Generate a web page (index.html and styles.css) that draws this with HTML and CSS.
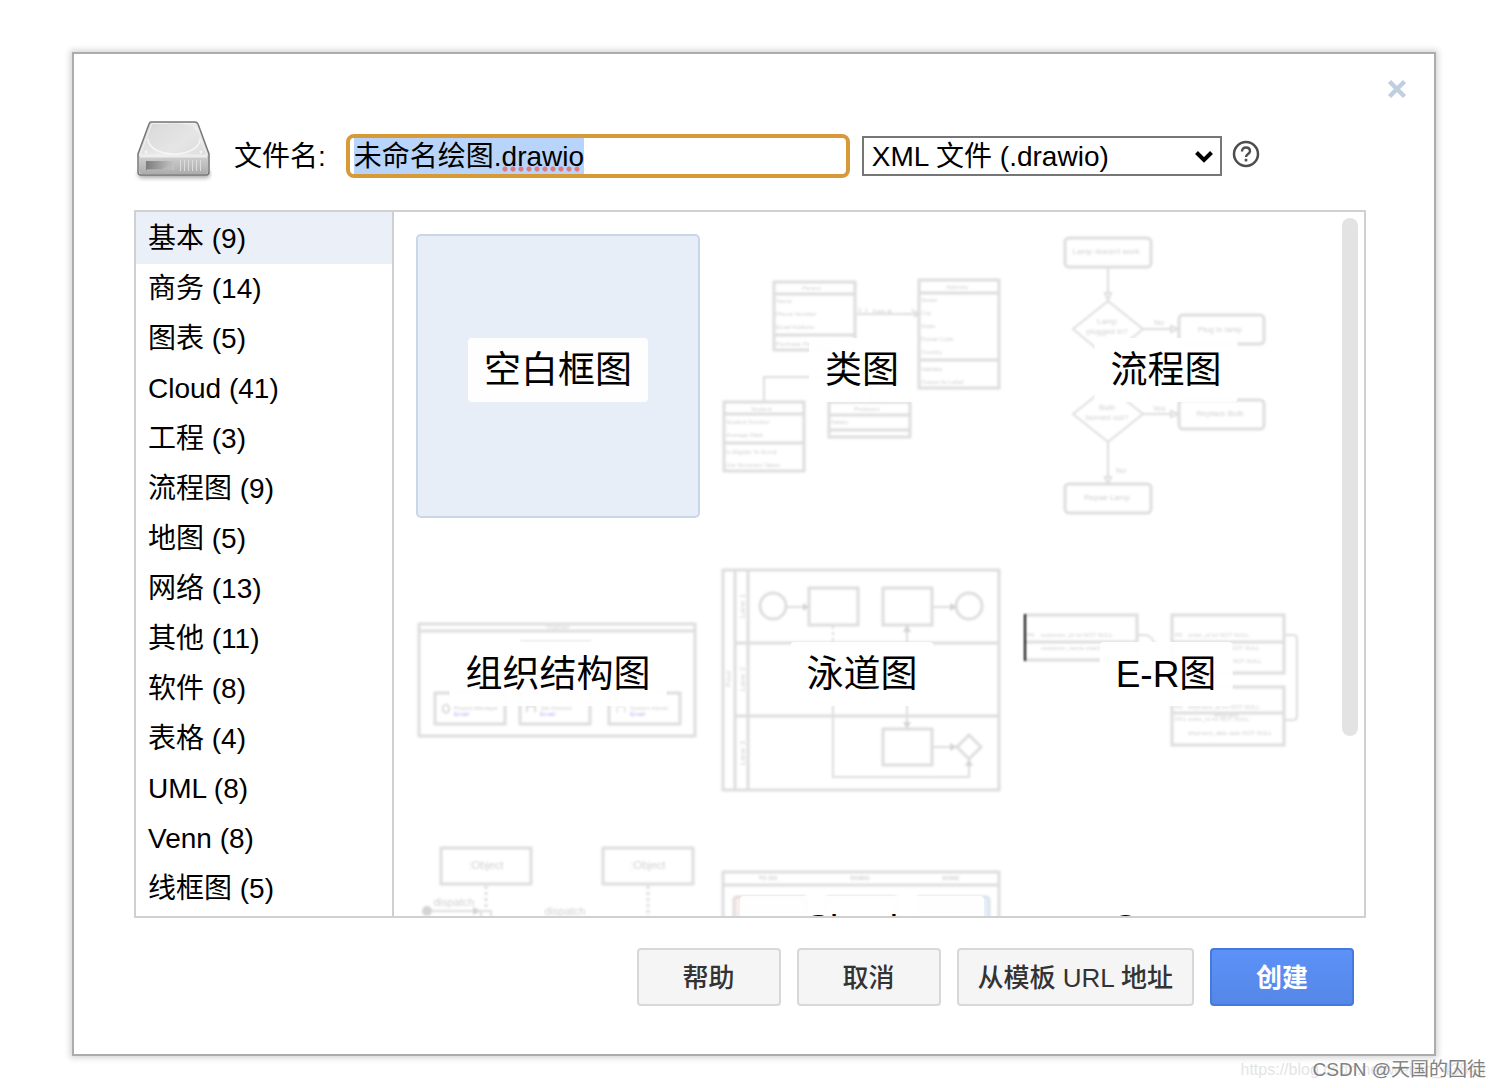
FILE: index.html
```html
<!DOCTYPE html>
<html lang="zh-CN">
<head>
  <meta charset="UTF-8" />
  <meta name="viewport" content="width=device-width, initial-scale=1.0"/>
  <title>未命名绘图.drawio</title>
  <link rel="stylesheet" href="styles.css">
</head>
<body>

  <main class="dialog">
    <button type="button" class="close-btn" aria-label="关闭">
      <svg width="20" height="20" viewBox="0 0 20 20"><path d="M2.500 2.500L17.500 17.500M17.500 2.500L2.500 17.500" stroke="#c0cfe0" stroke-width="4.500"/></svg>
    </button>

    <form class="file-row" id="fileForm">
      <svg class="drive-icon" viewBox="0 0 78 72">
        <defs>
          <linearGradient id="top" x1="0" y1="0" x2="1" y2="1">
            <stop offset="0" stop-color="#d2d2d2"/>
            <stop offset="0.5" stop-color="#ececec"/>
            <stop offset="1" stop-color="#cfcfcf"/>
          </linearGradient>
          <linearGradient id="front" x1="0" y1="0" x2="0" y2="1">
            <stop offset="0" stop-color="#d0d0d0"/>
            <stop offset="1" stop-color="#acacac"/>
          </linearGradient>
          <linearGradient id="slot" x1="0" y1="0" x2="1" y2="0">
            <stop offset="0" stop-color="#7d7d7d"/>
            <stop offset="1" stop-color="#c4c4c4"/>
          </linearGradient>
        </defs>
        <rect class="soft" x="4" y="50" width="72" height="8" rx="4" fill="#aaa"/>
        <path d="M17 2H61Q63 2 64 4L75 34V52Q75 55 72 55H7Q4 55 4 52V34L15 4Q16 2 17 2Z" fill="url(#top)" stroke="#777" stroke-width="1.500"/>
        <path d="M5 36H74V51Q74 54 71 54H8Q5 54 5 51Z" fill="url(#front)"/>
        <path d="M18 3.500H60L73 35H6Z" fill="none" stroke="#f2f2f2"/>
        <ellipse cx="40" cy="18" rx="26" ry="15" fill="#dedede" fill-opacity="0.5"/>
        <path d="M14 19A26 15 0 0 0 66 19" fill="none" stroke="#f6f6f6" stroke-width="1.500"/>
        <circle cx="12" cy="32" r="1.500" fill="#f5f5f5"/><circle cx="67" cy="32" r="1.500" fill="#f5f5f5"/>
        <path d="M6 36.500H73" stroke="#eee" stroke-width="2"/>
        <rect x="12" y="41" width="28" height="9" fill="url(#slot)"/>
        <path d="M13 49L28 49L39 43V50H13Z" fill="#bdbdbd" fill-opacity="0.6"/>
        <path d="M46.500 40V51M50.500 40V51M54.500 40V51M58.500 40V51M62.500 40V51M66.500 40V51" stroke="#dcdcdc"/>
      </svg>
      <label class="file-label" for="filename">文件名:</label>
      <div class="name-field">
        <input type="text" id="filename" name="filename" value="未命名绘图.drawio" spellcheck="false" autofocus />
        <span class="spell-mark"></span>
      </div>
      <div class="type-field">
        <select id="filetype" name="filetype" aria-label="文件类型">
          <option>XML 文件 (.drawio)</option>
        </select>
        <svg class="chevron" width="20" height="14" viewBox="0 0 20 14"><path d="M2.500 2.500L10 10L17.500 2.500" fill="none" stroke="#000" stroke-width="4"/></svg>
      </div>
      <a class="help-link" href="#help" aria-label="帮助">
        <svg width="28" height="32" viewBox="0 0 28 32">
          <circle cx="14" cy="14" r="12" fill="none" stroke="#4d4d4d" stroke-width="2.500"/>
          <path d="M10 11.500Q10 7.500 14 7.500T18 11.200C18 14 14 14 14 17" fill="none" stroke="#4d4d4d" stroke-width="2.400"/>
          <rect x="12.700" y="18.800" width="2.600" height="2.600" fill="#4d4d4d"/>
        </svg>
      </a>
    </form>

    <div class="picker">
      <nav class="categories">
        <button type="button" class="category active">基本 (9)</button>
        <button type="button" class="category">商务 (14)</button>
        <button type="button" class="category">图表 (5)</button>
        <button type="button" class="category">Cloud (41)</button>
        <button type="button" class="category">工程 (3)</button>
        <button type="button" class="category">流程图 (9)</button>
        <button type="button" class="category">地图 (5)</button>
        <button type="button" class="category">网络 (13)</button>
        <button type="button" class="category">其他 (11)</button>
        <button type="button" class="category">软件 (8)</button>
        <button type="button" class="category">表格 (4)</button>
        <button type="button" class="category">UML (8)</button>
        <button type="button" class="category">Venn (8)</button>
        <button type="button" class="category">线框图 (5)</button>
      </nav>

      <div class="template-pane">
        <div class="templates">
          <button type="button" class="template selected">
            <span class="template-label">空白框图</span>
          </button>

          <!-- Class diagram -->
          <button type="button" class="template">
            <svg class="preview" viewBox="0 0 284 284">
              <g class="line">
                <path d="M54 48H135V116H54ZM54 60H135M54 101H135"/>
                <path d="M199 46H279V154H199ZM199 59H279M199 126H279"/>
                <path d="M4 168H84V237H4ZM4 180H84M4 209H84"/>
                <path d="M109 168H190V203H109ZM109 181H190M109 196H190"/>
                <path class="thin" d="M135 80H199M44 168V143H150V168M105 143V116M194 77L199 80L194 83"/>
              </g>
              <g class="tiny">
                <text x="82" y="56">Person</text>
                <text x="56" y="69">Name</text><text x="56" y="82">Phone Number</text><text x="56" y="95">Email Address</text>
                <text x="56" y="112">Purchase Parking Pass</text>
                <text x="138" y="78">0..1</text><text x="153" y="79">lives at</text><text x="191" y="78">1</text>
                <text x="226" y="55">Address</text>
                <text x="201" y="68">Street</text><text x="201" y="81">City</text><text x="201" y="94">State</text>
                <text x="201" y="107">Postal Code</text><text x="201" y="120">Country</text>
                <text x="201" y="137">Validate</text><text x="201" y="150">Output As Label</text>
                <text x="31" y="177">Student</text>
                <text x="6" y="190">Student Number</text><text x="6" y="203">Average Mark</text>
                <text x="6" y="220">Is Eligible To Enroll</text><text x="6" y="233">Get Seminars Taken</text>
                <text x="134" y="177">Professor</text><text x="111" y="190">Salary</text>
              </g>
            </svg>
            <span class="template-label">类图</span>
          </button>

          <!-- Flowchart -->
          <button type="button" class="template">
            <svg class="preview" viewBox="0 0 284 284">
              <g class="line">
                <rect x="41" y="4" width="86" height="29" rx="4"/>
                <rect x="155" y="81" width="85" height="29" rx="4"/>
                <rect x="155" y="166" width="85" height="29" rx="4"/>
                <rect x="41" y="250" width="86" height="29" rx="4"/>
                <path class="thin" d="M84 33V59M84 124V152M84 208V243M119 95H147M119 180H147"/>
                <path class="thin" d="M84 67L119 95L84 124L49 95ZM84 152L119 180L84 208L49 180Z"/>
                <path class="thin" d="M81 59H87L84 66ZM81 243H87L84 250ZM147 92V98L154 95ZM147 177V183L154 180Z"/>
              </g>
              <g class="small">
                <text x="82" y="20">Lamp doesn't work</text>
                <text x="83" y="90">Lamp</text><text x="83" y="100">plugged in?</text>
                <text x="135" y="91">No</text><text x="196" y="98">Plug in lamp</text>
                <text x="83" y="176">Bulb</text><text x="83" y="186">burned out?</text>
                <text x="135" y="177">Yes</text><text x="196" y="182">Replace Bulb</text>
                <text x="97" y="239">No</text><text x="83" y="266">Repair Lamp</text>
              </g>
            </svg>
            <span class="template-label">流程图</span>
          </button>

          <!-- Org chart -->
          <button type="button" class="template">
            <svg class="preview" viewBox="0 0 284 284">
              <g class="line">
                <path d="M3 86H279V198H3ZM3 93H279"/>
                <path d="M19 155H89V186H19ZM104 155H174V186H104ZM193 155H264V186H193Z"/>
                <path class="faint" d="M104 103H175"/>
                <path class="thin" d="M27 169Q30 164 33 169Q34 174 30 175Q26 174 27 169ZM111 174V168H119V174"/>
                <path class="faint" d="M201 175V170L205 167L209 170V175"/>
              </g>
              <g class="tiny">
                <text x="130" y="91">Orgchart</text>
                <text x="38" y="172">Project Manager</text><text x="124" y="172">Job Director</text><text x="214" y="172">System Admin</text>
                <text class="email" x="38" y="178">Email</text><text class="email" x="124" y="178">Email</text><text class="email" x="214" y="178">Email</text>
              </g>
            </svg>
            <span class="template-label">组织结构图</span>
          </button>

          <!-- Swimlanes -->
          <button type="button" class="template">
            <svg class="preview" viewBox="0 0 284 284">
              <g class="line">
                <path d="M3 32H279V252H3ZM15 32V252M28 32V252M15 105H279M15 178H279"/>
                <circle cx="53" cy="68" r="13"/><circle cx="249" cy="68" r="13"/>
                <path d="M89 50H138V87H89ZM163 50H212V87H163ZM163 191H212V227H163Z"/>
                <path class="thin" d="M66 69H84M212 69H232M212 209H232M187 93V185M113 165V239H249V225"/>
                <path class="thin dotted" d="M113 88V165"/>
                <path d="M249 197L261 209L249 221L237 209Z"/>
              </g>
              <path class="solid" d="M83 65L89 69L83 73ZM230 65L237 69L230 73ZM230 205L237 209L230 213ZM183 94L187 87L191 94ZM183 184L187 191L191 184ZM245 228L249 221L253 228Z"/>
              <g class="small">
                <text transform="translate(25 68) rotate(-90)">Lane 1</text>
                <text transform="translate(25 141) rotate(-90)">Lane 2</text>
                <text transform="translate(25 215) rotate(-90)">Lane 3</text>
                <text transform="translate(11 141) rotate(-90)">Pool</text>
              </g>
            </svg>
            <span class="template-label">泳道图</span>
          </button>

          <!-- Entity relations -->
          <button type="button" class="template">
            <svg class="preview" viewBox="0 0 284 284">
              <g class="line">
                <path d="M1 77H113V122H1M1 104H113"/>
                <path d="M148 77H260V135H148ZM148 104H260M148 149H260V207H148ZM148 175H260"/>
                <path class="thin" d="M113 97H121Q126 97 130 104T148 111M260 97H269Q273 97 273 101V178Q273 182 269 182H260"/>
              </g>
              <g class="tiny">
                <text x="3" y="99">PK</text><text x="17" y="99">customer_id int NOT NULL</text>
                <text x="17" y="112">customer_name char(50)</text>
                <text x="151" y="99">PK</text><text x="164" y="99">order_id int NOT NULL</text>
                <text x="164" y="112">customer_id int NOT NULL</text><text x="164" y="125">order_date date NOT NULL</text>
                <text x="151" y="171">PK</text><text x="164" y="171">shipment_id int NOT NULL</text>
                <text x="151" y="183">FK1</text><text x="164" y="183">order_id int NOT NULL</text><text x="190" y="179">shipment</text>
                <text x="164" y="197">shipment_date date NOT NULL</text>
              </g>
              <path class="dark-edge" d="M1 76V123"/>
            </svg>
            <span class="template-label">E-R图</span>
          </button>

          <!-- Sequence -->
          <button type="button" class="template">
            <svg class="preview" viewBox="0 0 284 284">
              <g class="line">
                <path d="M25 6H115V42H25ZM187 6H277V42H187Z"/>
                <path class="dotted" d="M70 44V68M232 44V140"/>
                <path class="thin" d="M11 69H60M65 69H75V140H65Z"/>
              </g>
              <circle class="solid" cx="11" cy="69" r="5"/>
              <path class="solid" d="M57 65L65 69L57 73Z"/>
              <g class="medium">
                <text x="70" y="27">:Object</text><text x="232" y="27">:Object</text>
                <text x="38" y="64">dispatch</text><text x="149" y="73">dispatch</text>
              </g>
            </svg>
            <span class="template-label">时序图</span>
          </button>

          <!-- Board with three columns -->
          <button type="button" class="template">
            <svg class="preview" viewBox="0 0 284 284">
              <path class="line" d="M3 30H279V250H3ZM3 43H279"/>
              <rect x="14" y="55" width="72" height="190" rx="3" fill="#f9eeee" stroke="#e6dcdc" stroke-width="3"/>
              <rect x="106" y="55" width="71" height="190" rx="3" fill="#f0f5ee" stroke="#dfe3de" stroke-width="3"/>
              <rect x="197" y="55" width="72" height="190" rx="3" fill="#e8f1fa" stroke="#dbe2ea" stroke-width="3"/>
              <g class="small bold">
                <text x="48" y="38">TO DO</text><text x="140" y="38">DOING</text><text x="231" y="38">DONE</text>
              </g>
            </svg>
            <span class="template-label wide">Simple<br>Kanban<br>Board</span>
          </button>

          <button type="button" class="template">
            <span class="template-label wide">Cross-<br>Functional<br>Flowchart</span>
          </button>
        </div>
        <div class="scroll-thumb"></div>
      </div>
    </div>

    <div class="actions">
      <button type="button" class="btn">帮助</button>
      <button type="button" class="btn">取消</button>
      <button type="button" class="btn">从模板 URL 地址</button>
      <button type="submit" form="fileForm" class="btn primary">创建</button>
    </div>
  </main>

  <footer class="watermark">
    <span class="watermark-url">https://blog.csdn.net/weixin_43844</span>
    <span class="watermark-name">CSDN @天国的囚徒</span>
  </footer>

  <script>
    const filename = document.getElementById("filename");
    filename.focus();
    filename.select();

    document.getElementById("fileForm").addEventListener("submit", function (e) {
      e.preventDefault();
    });

    // Only one entry of each list is highlighted
    function pickOne(selector, className) {
      const items = document.querySelectorAll(selector);
      items.forEach(function (item) {
        item.addEventListener("click", function () {
          items.forEach(function (other) { other.classList.remove(className); });
          item.classList.add(className);
        });
      });
    }

    pickOne(".category", "active");
    pickOne(".template", "selected");
  </script>

</body>
</html>
```

FILE: styles.css
```css
* {
  box-sizing: border-box;
}

body {
  margin: 0;
  background: #fff;
  color: #000;
  font-family: "Liberation Sans", "Noto Sans CJK SC", Arial, sans-serif;
  font-size: 28px;
}

button, input, select {
  font: inherit;
  color: inherit;
}

button {
  cursor: pointer;
}

.dialog {
  position: relative;
  margin: 52px 64px 0 72px;
  padding: 66px 68px 48px 60px;
  background: #fff;
  border: 2px solid #acacac;
  box-shadow: 0 0 6px 2px #d5d5d5;
}

.close-btn {
  position: absolute;
  top: 25px;
  right: 27px;
  display: flex;
  padding: 0;
  border: none;
  background: none;
}

/* File name row */
.file-row {
  display: flex;
  align-items: center;
  height: 72px;
  margin-bottom: 18px;
}

.drive-icon {
  width: 78px;
  height: 72px;
  flex: none;
  margin-right: 22px;
}

.soft {
  filter: blur(2px);
}

.file-label {
  flex: none;
  margin-right: 20px;
  padding-bottom: 4px;
}

.name-field {
  position: relative;
  flex: 0 1 504px;
  margin-right: 12px;
}

.name-field input {
  display: block;
  width: 100%;
  height: 44px;
  padding: 0 4px 4px;
  border: 4px solid #d79a39;
  border-radius: 8px;
  outline: none;
}

.name-field input::selection {
  background: #b8d4fa;
  color: #000;
}

/* Dots under the misspelt word */
.spell-mark {
  position: absolute;
  left: 155px;
  top: 32px;
  width: 80px;
  height: 6px;
  background: radial-gradient(circle, #dc7a80 0 2px, transparent 3px) 0 0 / 8px 6px;
  pointer-events: none;
}

.type-field {
  position: relative;
  flex: 0 1 360px;
  margin-right: 10px;
}

.type-field select {
  display: block;
  width: 100%;
  height: 40px;
  padding: 0 8px;
  border: 2px solid #767676;
  border-radius: 0;
  background: #fff;
  appearance: none;
}

.chevron {
  position: absolute;
  right: 8px;
  top: 14px;
  pointer-events: none;
}

.help-link {
  display: flex;
}

/* Template picker */
.picker {
  display: flex;
  height: 708px;
  border: 2px solid #d0d0d0;
}

.categories {
  flex: 0 0 258px;
  overflow: hidden;
  border-right: 2px solid #d0d0d0;
}

.category {
  display: block;
  width: 100%;
  height: 52px;
  margin-bottom: -2px;
  padding: 2px 12px 0;
  border: none;
  background: none;
  line-height: 50px;
  text-align: left;
}

.category.active {
  background: #ebf0f8;
}

.template-pane {
  position: relative;
  flex: 1;
  min-width: 0;
}

.templates {
  display: grid;
  grid-template-columns: repeat(auto-fill, 284px);
  gap: 20px;
  height: 100%;
  padding: 22px;
  overflow-y: auto;
  scrollbar-width: none;
}

.template {
  position: relative;
  height: 284px;
  padding: 0;
  border: 2px solid transparent;
  border-radius: 5px;
  background: none;
}

.template.selected {
  background: #e7eef7;
  border-color: #c9d7e8;
}

.template-label {
  position: absolute;
  top: 134px;
  left: 50%;
  transform: translate(-50%, -50%);
  padding: 8px 16px 6px;
  border-radius: 4px;
  background: rgba(255, 255, 255, 0.93);
  font-size: 37px;
  line-height: 50px;
  white-space: nowrap;
}

.template-label.wide {
  width: 244px;
}

.preview {
  display: block;
  width: 284px;
  height: 284px;
  margin: -2px;
  filter: blur(0.8px);
}

.preview .line {
  fill: none;
  stroke: #dedede;
  stroke-width: 3;
}

.preview .thin {
  stroke-width: 2;
}

.preview .faint {
  stroke: #ebebeb;
  stroke-width: 2;
}

.preview .dotted {
  stroke-dasharray: 3 3;
}

.preview .solid {
  fill: #d4d4d4;
}

.preview .dark-edge {
  stroke: #000;
  stroke-width: 2;
}

.preview text {
  fill: #d0d0d0;
}

.preview .tiny {
  font-size: 6px;
}

.preview .small {
  font-size: 8px;
  text-anchor: middle;
}

.preview .medium {
  font-size: 11px;
  text-anchor: middle;
}

.preview .bold {
  font-size: 6px;
  font-weight: bold;
}

.preview .email {
  fill: #b0b0f5;
}

.scroll-thumb {
  position: absolute;
  top: 6px;
  right: 6px;
  width: 16px;
  height: 518px;
  border-radius: 8px;
  background: #e3e3e3;
}

/* Dialog buttons */
.actions {
  display: flex;
  justify-content: flex-end;
  gap: 16px;
  margin: 30px 12px 0 0;
}

.btn {
  min-width: 144px;
  height: 58px;
  padding: 0 19px 4px;
  border: 2px solid #d8d8d8;
  border-radius: 4px;
  background: #f5f5f5;
  color: #333;
  font-size: 26px;
  font-weight: 500;
}

.btn.primary {
  border-color: #4479de;
  background: linear-gradient(#5c91f8, #5487e6);
  color: #fff;
  font-weight: bold;
}

.watermark {
  display: grid;
  justify-items: end;
  padding: 1px 14px 0 0;
  line-height: 26px;
  white-space: nowrap;
}

.watermark span {
  grid-area: 1 / 1;
}

.watermark-url {
  color: #e4e4e4;
  font-size: 16px;
}

.watermark-name {
  color: #808080;
  font-size: 19px;
}
```
